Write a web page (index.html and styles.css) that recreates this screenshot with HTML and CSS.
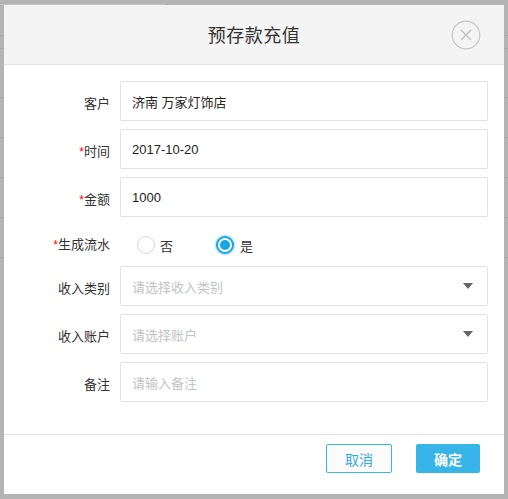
FILE: index.html
```html
<!DOCTYPE html>
<html lang="zh">
<head>
<meta charset="utf-8">
<title>预存款充值</title>
<link rel="stylesheet" href="styles.css">
</head>
<body>
<div class="dialog">
  <div class="header">
    <div class="title">预存款充值</div>
    <div class="close">
      <svg width="30" height="30" viewBox="0 0 30 30">
        <circle cx="15" cy="15" r="13.8" fill="none" stroke="#c8c8c8" stroke-width="1.2"/>
        <path d="M10 10 L20 20 M20 10 L10 20" stroke="#bdbdbd" stroke-width="1.2" fill="none"/>
      </svg>
    </div>
  </div>
  <div class="body">
    <div class="row">
      <div class="label">客户</div>
      <div class="field"><span class="value">济南 万家灯饰店</span></div>
    </div>
    <div class="row">
      <div class="label"><span class="req">*</span>时间</div>
      <div class="field"><span class="value">2017-10-20</span></div>
    </div>
    <div class="row">
      <div class="label"><span class="req">*</span>金额</div>
      <div class="field"><span class="value">1000</span></div>
    </div>
    <div class="row radio-row">
      <div class="label"><span class="req">*</span>生成流水</div>
      <div class="radios">
        <span class="radio"><span class="circle"></span><span class="rtext">否</span></span>
        <span class="radio on"><span class="circle"><span class="dot"></span></span><span class="rtext">是</span></span>
      </div>
    </div>
    <div class="row">
      <div class="label">收入类别</div>
      <div class="field select"><span class="ph">请选择收入类别</span><span class="arrow"></span></div>
    </div>
    <div class="row">
      <div class="label">收入账户</div>
      <div class="field select"><span class="ph">请选择账户</span><span class="arrow"></span></div>
    </div>
    <div class="row">
      <div class="label">备注</div>
      <div class="field"><span class="ph">请输入备注</span></div>
    </div>
  </div>
  <div class="footer">
    <div class="btn cancel">取消</div>
    <div class="btn ok">确定</div>
  </div>
</div>
</body>
</html>
```

FILE: styles.css
```css
html, body {
  margin: 0;
  padding: 0;
}
body {
  width: 508px;
  height: 499px;
  overflow: hidden;
  font-family: "Liberation Sans", "Noto Sans CJK SC", sans-serif;
  color: #333;
  background-color: #b4b4b4;
  background-image:
    linear-gradient(#c4c4c4, #c4c4c4),
    linear-gradient(#a9a9a9, #a9a9a9),
    linear-gradient(#a9a9a9, #a9a9a9),
    linear-gradient(#a9a9a9, #a9a9a9),
    linear-gradient(#a9a9a9, #a9a9a9),
    linear-gradient(#a9a9a9, #a9a9a9),
    linear-gradient(#a9a9a9, #a9a9a9),
    linear-gradient(#a9a9a9, #a9a9a9);
  background-size: 165px 1px, 100% 1px, 100% 1px, 100% 1px, 100% 1px, 100% 1px, 100% 1px, 100% 1px;
  background-position: 0 4px, 0 35px, 0 48px, 0 97px, 0 137px, 0 177px, 0 217px, 0 257px;
  background-repeat: no-repeat;
  display: flex;
  flex-direction: column;
}
.dialog {
  margin: 5px 0 0 4px;
  width: 500px;
  height: 489px;
  background: #fff;
  display: flex;
  flex-direction: column;
}
.header {
  height: 59px;
  background: #f4f4f4;
  border-bottom: 1px solid #e2e2e2;
  display: flex;
  align-items: center;
  justify-content: center;
  position: relative;
}
.title {
  font-size: 18px;
  color: #333;
  margin-top: -1px;
  letter-spacing: 0.5px;
}
.close {
  position: absolute;
  right: 23px;
  top: 15px;
  width: 30px;
  height: 30px;
}
.close svg {
  display: block;
}
.body {
  flex: 1;
  padding-top: 16px;
  display: flex;
  flex-direction: column;
  gap: 8px;
  border-bottom: 1px solid #e2e2e2;
}
.row {
  display: flex;
  flex: none;
  height: 40px;
  gap: 10px;
}
.label {
  width: 106px;
  flex: none;
  text-align: right;
  font-size: 13px;
  line-height: 18px;
  padding-top: 14px;
  box-sizing: border-box;
  color: #333;
}
.req {
  color: #f00;
  font-size: 12px;
}
.field {
  width: 368px;
  height: 40px;
  box-sizing: border-box;
  border: 1px solid #e2e2e2;
  border-radius: 2px;
  display: flex;
  align-items: center;
  padding: 0 11px;
  font-size: 13px;
}
.value {
  color: #222;
}
.ph {
  color: #c3c3c3;
}
.select {
  justify-content: space-between;
}
.arrow {
  width: 0;
  height: 0;
  border-left: 5px solid transparent;
  border-right: 5px solid transparent;
  border-top: 6px solid #666;
  margin-right: 3px;
}
.radio-row {
  height: 33px;
}
.radio-row .label {
  padding-top: 11px;
}
.radios {
  display: flex;
  padding-top: 11px;
  padding-left: 17px;
  gap: 43px;
  align-items: flex-start;
}
.radio {
  display: flex;
  align-items: center;
  height: 18px;
  gap: 5px;
  font-size: 13px;
}
.circle {
  width: 18px;
  height: 18px;
  box-sizing: border-box;
  border: 1px solid #d9d9d9;
  border-radius: 50%;
  background: #fff;
  display: flex;
  align-items: center;
  justify-content: center;
}
.on .circle {
  border: 2px solid #14a6e6;
  box-shadow: 0 0 0 1.5px #c8eafa;
}
.on .rtext {
  margin-left: 1px;
}
.dot {
  width: 10px;
  height: 10px;
  border-radius: 50%;
  background: #14a6e6;
}
.rtext {
  color: #333;
}
.footer {
  height: 59px;
  display: flex;
  justify-content: flex-end;
  align-items: flex-start;
  padding: 9px 24px 0 0;
  box-sizing: border-box;
  gap: 24px;
}
.btn {
  height: 29px;
  box-sizing: border-box;
  border-radius: 2px;
  display: flex;
  align-items: center;
  justify-content: center;
  font-size: 14px;
}
.cancel {
  width: 66px;
  border: 1px solid #3bb4e8;
  background: #fbfbfb;
  color: #3aa8e0;
}
.ok {
  width: 64px;
  background: #38b5e8;
  color: #fff;
  font-weight: bold;
}
```
